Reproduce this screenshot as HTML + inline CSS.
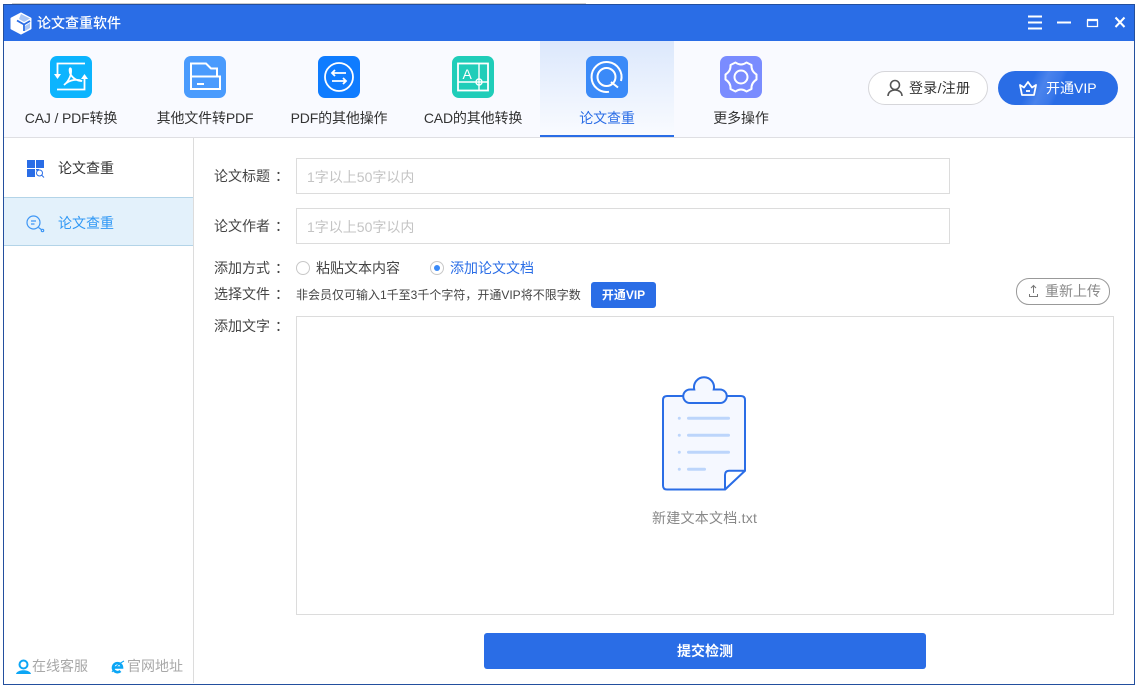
<!DOCTYPE html>
<html lang="zh"><head><meta charset="utf-8"><title>论文查重软件</title>
<style>
html,body{margin:0;padding:0;background:#fff}
body{width:1139px;height:693px;position:relative;overflow:hidden;font-family:"Liberation Sans","Noto Sans CJK SC",sans-serif;font-size:14px;color:#333}
.a{position:absolute;white-space:nowrap}
svg{position:absolute;overflow:visible}
.tab{position:absolute;top:41px;width:134px;height:96px;text-align:center}
.tab span{position:absolute;left:-10px;right:-10px;top:68px;line-height:18px;font-size:14px;letter-spacing:-.15px;color:#333}
.ic{position:absolute;left:46px;top:15px;width:42px;height:42px;border-radius:7px}
.ic svg{left:0;top:0}
.inp{position:absolute;left:296px;width:652px;height:34px;border:1px solid #dcdcdc;background:#fff;line-height:36px;text-indent:10px;color:#c4c4c4;font-size:14px}
.lb{position:absolute;left:214px;font-size:14px;line-height:18px;color:#444;white-space:nowrap}
.lb i{font-style:normal;font-family:"Noto Sans CJK TC",sans-serif;margin-left:5px}
</style></head><body>
<div class="a" style="left:12px;top:3px;width:574px;height:1px;background:#ccc"></div>
<div class="a" style="left:3px;top:4px;width:1130px;height:679px;border:1px solid #234f9e;background:#fff"></div>
<div class="a" style="left:4px;top:5px;width:1130px;height:36px;background:#2a6de6"></div>
<svg style="left:10px;top:12px" width="22" height="23" viewBox="0 0 22 23"><path d="M11 1.500L20.500 6.500V16.500L11 21.500L1.500 16.500V6.500Z" fill="#fff" stroke="#fff" stroke-width="2" stroke-linejoin="round"/><path d="M11 2L20 6.500L14 10L9 7Z" fill="#a9c6f6"/><path d="M7 8.500L14 12.500V19M14 12.500L20 9" fill="none" stroke="#2a6de6" stroke-width="1.800"/><path d="M15 14L20 11V16L15 19Z" fill="#a9c6f6"/></svg>
<div class="a" style="left:37px;top:14px;color:#fff;font-size:14px;line-height:19px;font-weight:500">论文查重软件</div>
<svg style="left:1027px;top:15px" width="100" height="16" viewBox="0 0 100 16" fill="none" stroke="#fff" stroke-width="2"><path d="M1 1.500H15M1 7.500H15M1 13.500H15"/><path d="M30 7.500H44" stroke-width="2"/><path d="M60.500 5.500H70.500V11.500H60.500ZM60 4.500H71" stroke-width="1.300"/><path d="M88.500 2.500L97.500 12M97.500 2.500L88.500 12" stroke-width="2"/></svg>

<div class="a" style="left:4px;top:41px;width:1130px;height:96px;background:#f9faff"></div>
<div class="a" style="left:4px;top:137px;width:1130px;height:1px;background:#dfdfe3"></div>
<div class="a" style="left:540px;top:41px;width:134px;height:94px;background:linear-gradient(#dce8fc,#f9fbff)"></div>
<div class="a" style="left:540px;top:135px;width:134px;height:2px;background:#2a6de6"></div>

<div class="tab" style="left:4px"><div class="ic" style="background:#0cb4fe"><svg width="42" height="42" viewBox="0 0 42 42" fill="none" stroke="#fff" stroke-width="1.800"><path d="M35 7.500H7.500V18"/><path d="M4 18H11L7.500 23Z" fill="#fff" stroke="none"/><path d="M7 33.500H34.500V23"/><path d="M31 23H38L34.500 18Z" fill="#fff" stroke="none"/><path d="M14 29C18 26 22 19 21 13C20 11 19 13 20 17C22 22 27 25 32 25C28 23 20 23 14 29Z" stroke-width="1.700"/></svg></div><span>CAJ / PDF转换</span></div>
<div class="tab" style="left:138px"><div class="ic" style="background:#4a9bfd"><svg width="42" height="42" viewBox="0 0 42 42" fill="none" stroke="#fff" stroke-width="2"><path d="M7 20.500V7.500H22L27 12.500H33V20.500"/><path d="M7 20.500H36V33H7Z"/><path d="M13 28H20"/></svg></div><span>其他文件转PDF</span></div>
<div class="tab" style="left:272px"><div class="ic" style="background:#0f7cff"><svg width="42" height="42" viewBox="0 0 42 42" fill="none" stroke="#fff" stroke-width="1.800"><circle cx="21" cy="21" r="14"/><path d="M28 17H14M17 14L14 17L17 20M14 25H28M25 22L28 25L25 28"/></svg></div><span>PDF的其他操作</span></div>
<div class="tab" style="left:406px"><div class="ic" style="background:#20cdb9"><svg width="42" height="42" viewBox="0 0 42 42" fill="none" stroke="#fff" stroke-width="1.400"><rect x="6" y="7.500" width="30" height="27" stroke-width="1.800"/><path d="M6 26H36M27 7.500V34.500"/><circle cx="27" cy="26" r="3"/><text x="10.500" y="23" fill="#fff" stroke="none" font-size="14" font-family="Liberation Sans">A</text></svg></div><span>CAD的其他转换</span></div>
<div class="tab" style="left:540px"><div class="ic" style="background:#3a8af8"><svg width="42" height="42" viewBox="0 0 42 42" fill="none" stroke="#fff" stroke-width="2"><path d="M23 35.800A15 15 0 1 1 35 25"/><circle cx="20.500" cy="21" r="9"/><path d="M25 26L32 31.500"/></svg></div><span style="color:#2a6de6">论文查重</span></div>
<div class="tab" style="left:674px"><div class="ic" style="background:#7a8cff"><svg width="42" height="42" viewBox="0 0 42 42" fill="none" stroke="#fff" stroke-width="2" stroke-linejoin="round"><path d="M15.500 6.500Q21 10.500 26.500 6.500L31.500 9Q31 15 36.500 18.500V23.500Q31 27 31.500 33L26.500 35.500Q21 31.500 15.500 35.500L10.500 33Q11 27 5.500 23.500V18.500Q11 15 10.500 9Z"/><circle cx="21" cy="21" r="6.500"/></svg></div><span>更多操作</span></div>

<div class="a" style="left:868px;top:71px;width:118px;height:32px;border:1px solid #d6d6da;border-radius:17px;background:#fff"></div>
<svg style="left:886px;top:79px" width="18" height="18" viewBox="0 0 18 18" fill="none" stroke="#555" stroke-width="1.600"><circle cx="9" cy="6" r="4.500"/><path d="M2 17C2 9 16 9 16 17"/></svg>
<div class="a" style="left:909px;top:79px;line-height:18px;color:#333;letter-spacing:.3px">登录/注册</div>
<div class="a" style="left:998px;top:71px;width:120px;height:34px;border-radius:17px;background:linear-gradient(115deg,#2a6de6 28%,#4a83ec 38%,#3a78ea 48%,#2a6de6 52%)"></div>
<svg style="left:1019px;top:80px" width="18" height="17" viewBox="0 0 18 17" fill="none" stroke="#fff" stroke-width="1.800"><path d="M1 5L5 7.500L9 2L13 7.500L17 5L15 15H3Z" stroke-linejoin="round"/><path d="M7 11H11"/></svg>
<div class="a" style="left:1046px;top:79px;line-height:18px;color:#fff">开通VIP</div>

<div class="a" style="left:193px;top:138px;width:1px;height:545px;background:#dcdcdc"></div>
<svg style="left:27px;top:160px" width="18" height="18" viewBox="0 0 18 18"><path d="M0 0H8V8H0ZM9 0H17V8H9ZM0 9H8V17H0ZM9 9H12V10.500H9Z" fill="#2a6de6"/><circle cx="12.500" cy="13" r="3" fill="#fff" stroke="#2a6de6" stroke-width="1"/><path d="M14.500 15L17 17.500" stroke="#2a6de6"/></svg>
<div class="a" style="left:58px;top:159px;line-height:18px;color:#333">论文查重</div>
<div class="a" style="left:4px;top:197px;width:189px;height:47px;background:#e3f1fb;border-top:1px solid #b3d4e8;border-bottom:1px solid #b3d4e8"></div>
<svg style="left:26px;top:215px" width="20" height="18" viewBox="0 0 20 18" fill="none" stroke="#3f97f5" stroke-width="1.200"><circle cx="7.500" cy="7.500" r="6.500"/><path d="M5 6H10M5 9H8.500M12.500 12.500L16 15"/><circle cx="16.500" cy="15.500" r="1.200"/></svg>
<div class="a" style="left:58px;top:214px;line-height:18px;color:#2f98f5">论文查重</div>

<svg style="left:16px;top:659px" width="15" height="16" viewBox="0 0 15 16"><circle cx="7.500" cy="5.500" r="5" fill="#0ca6f5"/><circle cx="7.500" cy="5.500" r="3" fill="#fff"/><path d="M0 15C1 10 14 10 15 15Z" fill="#0ca6f5"/></svg>
<div class="a" style="left:32px;top:657px;line-height:18px;color:#a8a8a8">在线客服</div>
<svg style="left:111px;top:660px" width="14" height="14" viewBox="0 0 14 14" fill="none" stroke="#0ca6f5"><path d="M2.500 7.500H11A4.500 4.500 0 1 0 9.500 11" stroke-width="2.600"/><path d="M1 12C4 7 9 3 13 1" stroke-width="1"/></svg>
<div class="a" style="left:127px;top:657px;line-height:18px;color:#a8a8a8">官网地址</div>

<div class="lb" style="top:167px">论文标题<i>：</i></div>
<div class="inp" style="top:158px">1字以上50字以内</div>
<div class="lb" style="top:217px">论文作者<i>：</i></div>
<div class="inp" style="top:208px">1字以上50字以内</div>
<div class="lb" style="top:259px">添加方式<i>：</i></div>
<div class="a" style="left:296px;top:261px;width:12px;height:12px;border:1px solid #c8c8c8;border-radius:50%;background:#fff"></div>
<div class="a" style="left:316px;top:259px;line-height:18px;color:#444">粘贴文本内容</div>
<div class="a" style="left:430px;top:261px;width:12px;height:12px;border:1px solid #c8c8c8;border-radius:50%;background:#fff"></div>
<div class="a" style="left:434px;top:265px;width:6px;height:6px;border-radius:50%;background:#3a8af8"></div>
<div class="a" style="left:450px;top:259px;line-height:18px;color:#2a6de6">添加论文文档</div>
<div class="lb" style="top:285px">选择文件<i>：</i></div>
<div class="a" style="left:296px;top:286px;line-height:18px;font-size:12px;color:#444">非会员仅可输入1千至3千个字符，开通VIP将不限字数</div>
<div class="a" style="left:591px;top:282px;width:65px;height:26px;line-height:26px;text-align:center;background:#2a6de6;border-radius:3px;color:#fff;font-size:12px;font-weight:700">开通VIP</div>
<div class="a" style="left:1016px;top:278px;width:92px;height:25px;border:1px solid #999;border-radius:13px;background:#fff"></div>
<svg style="left:1028px;top:284px" width="12" height="14" viewBox="0 0 12 14" fill="none" stroke="#777"><path d="M5.500 9V1.500M3 4L5.500 1.500L8 4M1.500 10V12.500H9.500V10"/></svg>
<div class="a" style="left:1045px;top:282px;line-height:18px;font-size:14px;color:#888">重新上传</div>
<div class="lb" style="top:317px">添加文字<i>：</i></div>
<div class="a" style="left:296px;top:316px;width:816px;height:297px;border:1px solid #dcdcdc;background:#fff"></div>

<svg style="left:662px;top:377px" width="84" height="114" viewBox="0 0 84 114" fill="none">
<path d="M5 19H79Q83 19 83 23V93.700L63 112.500H5Q1 112.500 1 108.500V23Q1 19 5 19Z" stroke="#2a6de6" stroke-width="2" fill="#f5f8ff" stroke-linejoin="round"/>
<path d="M83 93.700L63 112.500V98Q63 93.700 67 93.700Z" fill="#fff" stroke="#2a6de6" stroke-width="2" stroke-linejoin="round"/>
<path d="M32.250 12.500A10 10 0 1 1 51.750 12.500H58A6.700 6.700 0 0 1 58 26H28A6.700 6.700 0 0 1 28 12.500Z" fill="#f5f8ff" stroke="#2a6de6" stroke-width="2"/>
<g fill="#bcd5fb"><circle cx="17.300" cy="41.300" r="1.500"/><circle cx="17.300" cy="58.300" r="1.500"/><circle cx="17.300" cy="75.300" r="1.500"/><circle cx="17.300" cy="92.300" r="1.500"/><rect x="25" y="39.800" width="43" height="3" rx="1.500"/><rect x="25" y="56.800" width="43" height="3" rx="1.500"/><rect x="25" y="73.800" width="43" height="3" rx="1.500"/><rect x="25" y="90.800" width="19" height="3" rx="1.500"/></g>
</svg>
<div class="a" style="left:652px;top:509px;line-height:18px;color:#888;letter-spacing:.25px">新建文本文档.txt</div>
<div class="a" style="left:484px;top:633px;width:442px;height:36px;line-height:37px;text-align:center;background:#2a6de6;border-radius:3px;color:#fff;font-size:14px;font-weight:700">提交检测</div>
</body></html>
